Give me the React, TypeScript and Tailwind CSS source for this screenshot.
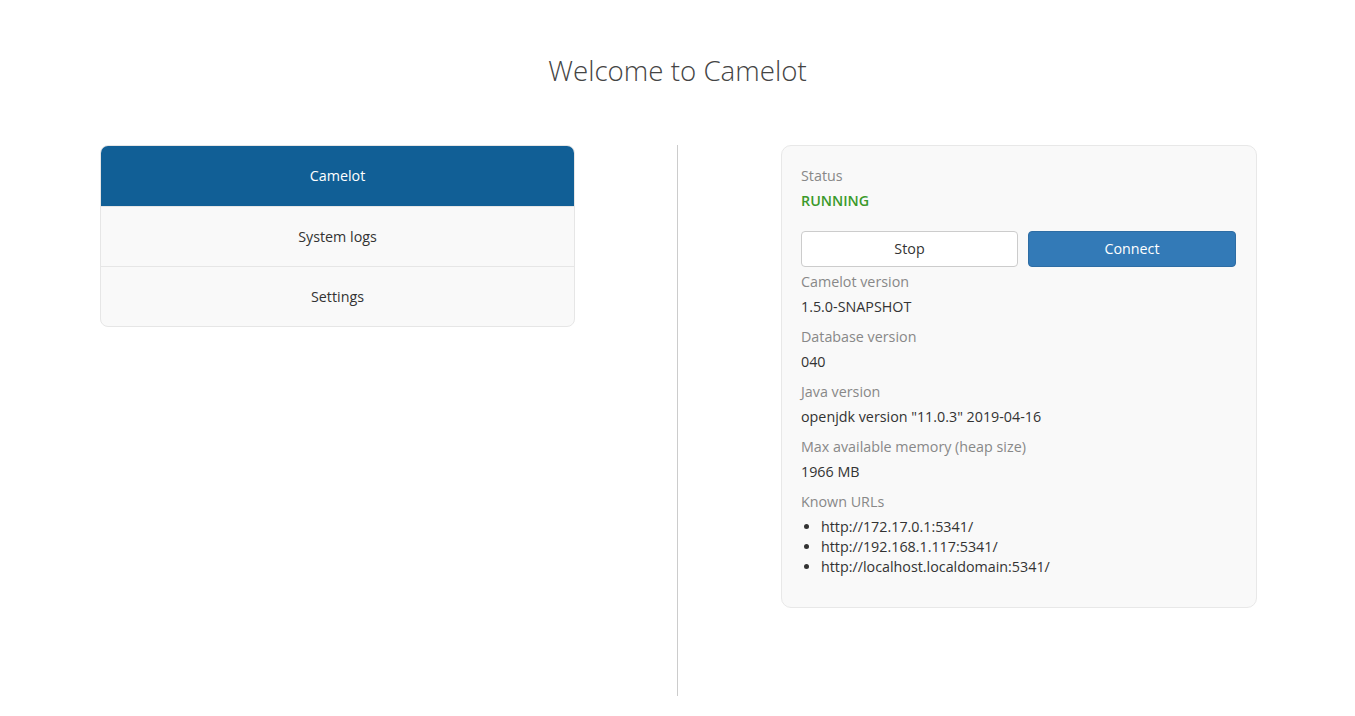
import React from 'react';

const navItems = ['Camelot', 'System logs', 'Settings'];

const info = [
  { label: 'Camelot version', value: '1.5.0-SNAPSHOT' },
  { label: 'Database version', value: '040' },
  { label: 'Java version', value: 'openjdk version "11.0.3" 2019-04-16' },
  { label: 'Max available memory (heap size)', value: '1966 MB' },
];

const urls = [
  'http://172.17.0.1:5341/',
  'http://192.168.1.117:5341/',
  'http://localhost.localdomain:5341/',
];

const App = () => {
  return (
    <div className="h-[716px] flex flex-col bg-white font-['Open_Sans',sans-serif] text-[14.3px] leading-[20px] text-[#333]">
      {/* Title */}
      <h1 className="pt-[48px] text-center text-[27.7px] leading-[45px] font-light text-[#444]">
        Welcome to Camelot
      </h1>

      <div className="flex flex-1 pl-[100px] pr-[98px] pt-[52px] pb-[20px]">
        {/* Navigation */}
        <div className="w-[475px] self-start rounded-[8px] border border-[#e6e6e6] bg-[#f9f9f9] overflow-hidden">
          {navItems.map((item, i) => (
            <div
              key={item}
              className={
                i === 0
                  ? 'h-[60px] flex items-center justify-center bg-[#115f96] text-white'
                  : 'h-[60px] flex items-center justify-center border-t border-[#e6e6e6] text-[#333]'
              }
            >
              {item}
            </div>
          ))}
        </div>

        {/* Divider */}
        <div className="flex-1 flex justify-center pr-[2px]">
          <div className="w-px h-full bg-[#cccccc]" />
        </div>

        {/* Status card */}
        <div className="w-[476px] self-start rounded-[10px] border border-[#e8e8e8] bg-[#f9f9f9] px-[19px] pt-[20px] pb-[30px]">
          <div className="mb-[5px] text-[#888]">Status</div>
          <div className="font-semibold text-[#3b9a2b]">RUNNING</div>

          <div className="flex gap-[10px] mt-[20px] mb-[5px]">
            <button className="w-[217px] h-[36px] rounded-[4px] border border-[#cccccc] bg-white text-[#333]">
              Stop
            </button>
            <button className="w-[208px] h-[36px] rounded-[4px] border border-[#2e6da4] bg-[#337ab7] text-white">
              Connect
            </button>
          </div>

          {info.map((row) => (
            <div key={row.label} className="mb-[10px]">
              <div className="mb-[5px] text-[#888]">{row.label}</div>
              <div>{row.value}</div>
            </div>
          ))}

          <div className="mb-[5px] text-[#888]">Known URLs</div>
          <ul className="list-disc pl-[20px]">
            {urls.map((u) => (
              <li key={u}>{u}</li>
            ))}
          </ul>
        </div>
      </div>
    </div>
  );
};

export default App;
